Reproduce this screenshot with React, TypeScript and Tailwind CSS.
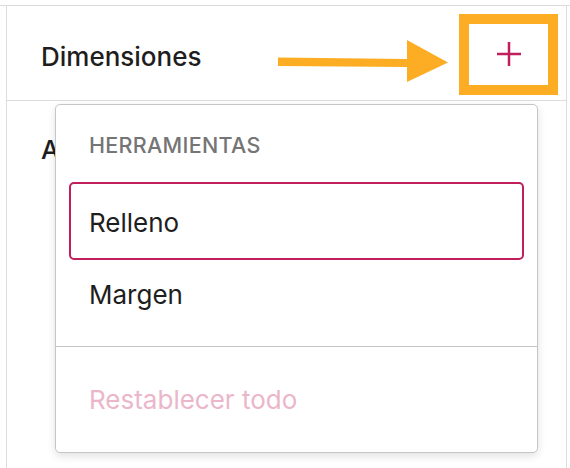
const menuItems = ["Relleno", "Margen"];

function PlusIcon() {
  return (
    <svg width="26" height="26" viewBox="0 0 26 26" fill="none">
      <path d="M13 1v24M1 13h24" stroke="#c01f5b" strokeWidth="2.5" />
    </svg>
  );
}

export default function App() {
  return (
    <div className="relative w-[570px] h-[468px] overflow-hidden bg-white font-['Inter',sans-serif] text-[#1e1e1e]">
      <div className="mt-[5px] border-t-[1.5px] border-[#dcdcdc]">
        <div className="ml-[6px] w-[561px] h-[470px] border-x-[1.5px] border-[#dcdcdc]">
          {/* Dimensiones header */}
          <div className="flex h-[95px] items-center justify-between border-b-[1.5px] border-[#dcdcdc] pl-[34px] pr-[8px]">
            <span className="mt-[7px] text-[26px] font-[450] leading-none">Dimensiones</span>
            <div className="flex h-[81px] w-[99px] items-center justify-center border-[10px] border-[#fcad24] mt-[2px]">
              <PlusIcon />
            </div>
          </div>
          <div className="pl-[34px] pt-[36px]">
            <span className="text-[26px] font-[450] leading-none">Apariencia</span>
          </div>
        </div>
      </div>

      {/* annotation arrow */}
      <svg className="absolute left-[276px] top-[38px]" width="176" height="46" viewBox="0 0 176 46">
        <path d="M2 19.5 L131 21 L131 2 L172 24.5 L131 44 L131 29 L2 28 Z" fill="#fcad24" />
      </svg>

      {/* dropdown */}
      <div className="absolute left-[55px] top-[104px] w-[483px] h-[349px] rounded-[5px] border-[1.5px] border-[#c6c6c6] bg-white shadow-[0_3px_8px_rgba(0,0,0,0.12)]">
        <div className="px-[13px] pt-[10px]">
          <div className="pl-[20px] pt-[20px] pb-[25px] text-[21.5px] font-medium uppercase leading-none tracking-[0.3px] text-[#757575]">
            Herramientas
          </div>
          {menuItems.map((item, i) => (
            <div
              key={item}
              className={
                i === 0
                  ? "flex h-[78px] items-center rounded-[5px] border-[2.5px] border-[#c01f5b] pl-[18px] pt-[4px] text-[26px] leading-none"
                  : "flex h-[73px] items-center rounded-[5px] border-[2.5px] border-transparent pl-[18px] pb-[2px] text-[26px] leading-none"
              }
            >
              {item}
            </div>
          ))}
        </div>
        <div className="mt-[13px] border-t-[1.5px] border-[#c6c6c6] px-[13px] pt-[15px]">
          <div className="flex h-[74px] items-center pl-[20px] pt-[2px] text-[26px] leading-none text-[#ecb6ca]">
            Restablecer todo
          </div>
        </div>
      </div>
    </div>
  );
}
